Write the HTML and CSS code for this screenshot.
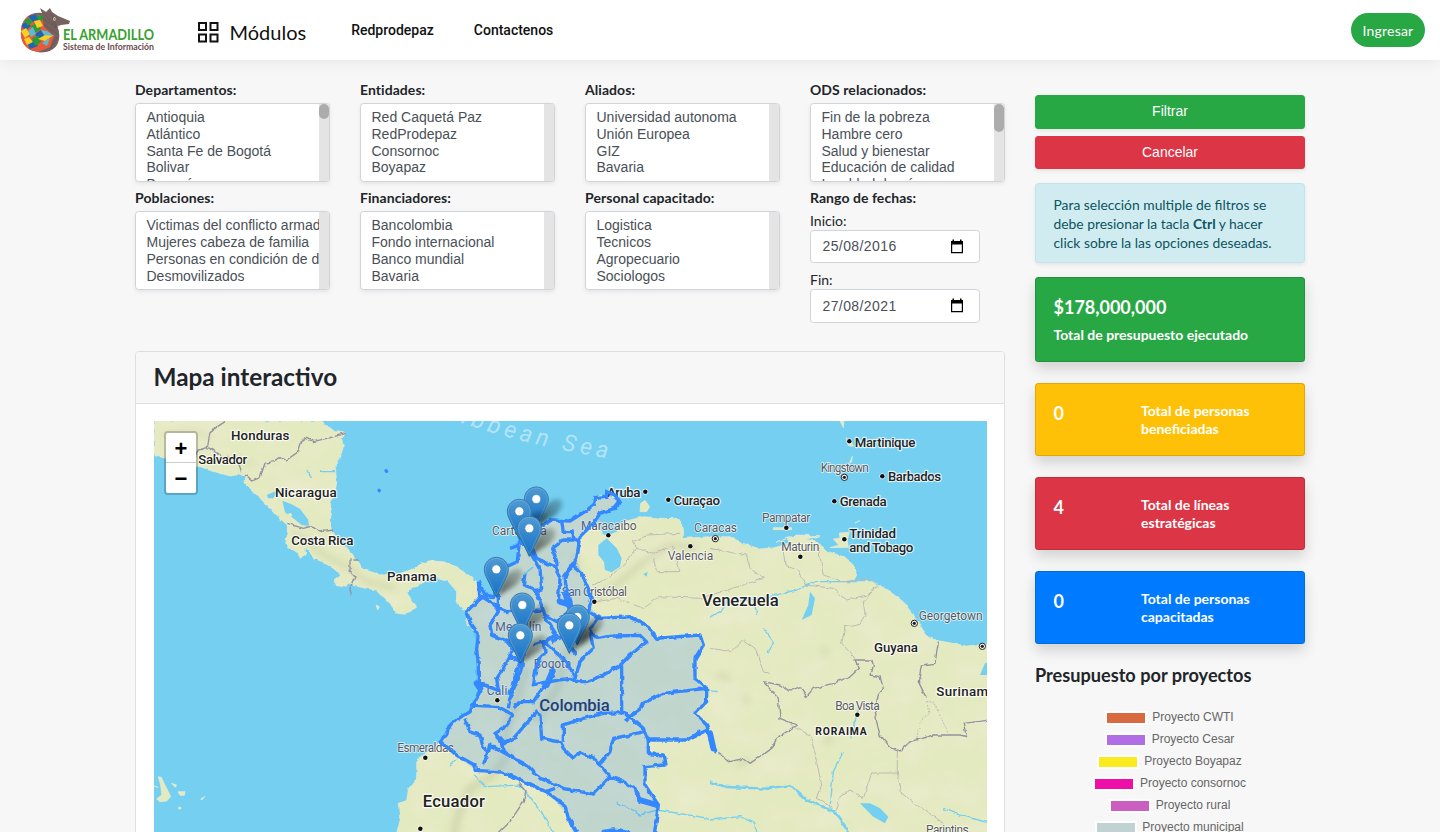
FILE: index.html
```html
<!DOCTYPE html>
<html lang="es">
<head>
<meta charset="utf-8">
<title>El Armadillo - Sistema de Información</title>
<link rel="stylesheet" href="styles.css">
</head>
<body>
<header class="navbar">
  <svg class="logo" width="136" height="46" viewBox="0 0 136 46" role="img" aria-label="El Armadillo">
    <defs><clipPath id="shell"><path d="M12 6C20 3 31 5 35 13C39 22 41 28 37 35C33 42 25 45 18 44C7 43 0 35 1 24C1 15 5 9 12 6Z"/></clipPath></defs>
    <path d="M14 6L22 5L20 0L26 4L30 0L32 4L38 8L50 13L49 16L41 17L37 18C40 25 40 31 37 37C32 44 24 45 18 44Z" fill="#75625f"/>
    <g clip-path="url(#shell)">
      <path d="M0 0H40V46H0Z" fill="#75625f"/>
      <path d="M0 10L12 5L22 8L24 19L34 28L30 39L18 44L5 40L0 28Z" fill="#e85b3a"/>
      <path d="M8 8L16 6L20 11L13 14ZM1 17L7 13L11 18L5 23ZM15 26L21 22L25 28L18 31ZM7 35L14 32L18 38L10 41Z" fill="#1f63b5"/>
      <path d="M16 7L23 8L22 13L18 12ZM4 12L9 10L13 14L8 18ZM11 18L17 15L21 21L15 25ZM12 30L19 28L21 34L15 38Z" fill="#279c3a"/>
      <path d="M1 23L6 20L10 26L5 30ZM14 13L20 12L23 18L17 20ZM18 31L25 27L34 27L25 33ZM4 31L9 29L13 34L7 37Z" fill="#f8cf22"/>
      <path d="M8 23L13 19L16 26L11 29ZM21 22L27 23L34 28L24 27ZM22 35L30 30L27 38Z" fill="#5fb9cf"/>
    </g>
    <path d="M25 7L36 19M31 5L36 18M21 9L36 20M35 20L40 17M24 16L37 26M29 43L37 29" stroke="#5d4c4a" stroke-width=".5" fill="none"/>
    <ellipse cx="34.5" cy="11" rx="1.2" ry="1.7" fill="#fff"/><circle cx="34.7" cy="11" r=".7" fill="#222"/>
    <text x="43" y="32" class="logo-name" textLength="91" lengthAdjust="spacingAndGlyphs">EL ARMADILLO</text>
    <text x="43" y="42" class="logo-sub" textLength="91" lengthAdjust="spacingAndGlyphs">Sistema de Información</text>
  </svg>
  <a class="modules"><svg width="22" height="22" viewBox="0 0 22 22" fill="none" stroke="#111" stroke-width="2"><path d="M2 2H9V9H2ZM13.500 2H20.500V9H13.500ZM2 13.500H9V20.500H2ZM13.500 13.500H20.500V20.500H13.500Z"/></svg><span>Módulos</span></a>
  <nav class="links"><a>Redprodepaz</a><a>Contactenos</a></nav>
  <a class="login">Ingresar</a>
</header>
<main class="container">
  <section class="main-col">
    <div class="filters">
      <div class="filter"><b>Departamentos:</b><div class="select"><ul><li>Antioquia</li><li>Atlántico</li><li>Santa Fe de Bogotá</li><li>Bolivar</li><li>Boyacá</li></ul><div class="track"><i class="thumb short"></i></div></div></div>
      <div class="filter"><b>Entidades:</b><div class="select"><ul><li>Red Caquetá Paz</li><li>RedProdepaz</li><li>Consornoc</li><li>Boyapaz</li></ul><div class="track"></div></div></div>
      <div class="filter"><b>Aliados:</b><div class="select"><ul><li>Universidad autonoma</li><li>Unión Europea</li><li>GIZ</li><li>Bavaria</li></ul><div class="track"></div></div></div>
      <div class="filter"><b>ODS relacionados:</b><div class="select"><ul><li>Fin de la pobreza</li><li>Hambre cero</li><li>Salud y bienestar</li><li>Educación de calidad</li><li>Igualdad de género</li></ul><div class="track"><i class="thumb"></i></div></div></div>
      <div class="filter"><b>Poblaciones:</b><div class="select"><ul><li>Victimas del conflicto armado</li><li>Mujeres cabeza de familia</li><li>Personas en condición de discapacidad</li><li>Desmovilizados</li></ul><div class="track"></div></div></div>
      <div class="filter"><b>Financiadores:</b><div class="select"><ul><li>Bancolombia</li><li>Fondo internacional</li><li>Banco mundial</li><li>Bavaria</li></ul><div class="track"></div></div></div>
      <div class="filter"><b>Personal capacitado:</b><div class="select"><ul><li>Logistica</li><li>Tecnicos</li><li>Agropecuario</li><li>Sociologos</li></ul><div class="track"></div></div></div>
      <div class="filter dates"><b>Rango de fechas:</b>
        <span class="date-label">Inicio:</span>
        <div class="date"><span>25/08/2016</span><svg width="14" height="16" viewBox="0 0 14 16"><path d="M1.600 3V13.600H12.400V3" fill="none" stroke="#000" stroke-width="1.200"/><path d="M1 2H13V5.500H1ZM2.500 .5H4V3H2.500ZM10 .5H11.500V3H10Z"/></svg></div>
        <span class="date-label">Fin:</span>
        <div class="date"><span>27/08/2021</span><svg width="14" height="16" viewBox="0 0 14 16"><path d="M1.600 3V13.600H12.400V3" fill="none" stroke="#000" stroke-width="1.200"/><path d="M1 2H13V5.500H1ZM2.500 .5H4V3H2.500ZM10 .5H11.500V3H10Z"/></svg></div>
      </div>
    </div>
    <article class="map-card">
      <h3>Mapa interactivo</h3>
      <div class="map-body"><div class="map">
        <svg class="map-svg" width="833" height="411" viewBox="12 18 2499 1233">
          <defs>
            <linearGradient id="pinFill" x1="0" y1="0" x2="0" y2="1"><stop offset="0" stop-color="#4f9bd3"/><stop offset="1" stop-color="#126fc6"/></linearGradient>
            <linearGradient id="pinEdge" x1="0" y1="0" x2="0" y2="1"><stop offset="0" stop-color="#3a7db0"/><stop offset="1" stop-color="#2e6c97"/></linearGradient>
            <linearGradient id="shade" x1="0" y1="1" x2="1" y2="0"><stop offset="0" stop-color="#000" stop-opacity=".8"/><stop offset="1" stop-color="#000" stop-opacity=".2"/></linearGradient>
            <filter id="soft" x="-50%" y="-50%" width="200%" height="200%"><feGaussianBlur stdDeviation="2.200"/></filter>
            <filter id="relief" x="-30%" y="-30%" width="160%" height="160%"><feGaussianBlur stdDeviation="9"/></filter>
            <filter id="rough" x="-5%" y="-5%" width="110%" height="110%" color-interpolation-filters="sRGB"><feTurbulence type="fractalNoise" baseFrequency=".05" numOctaves="2" seed="4"/><feDisplacementMap in="SourceGraphic" scale="12" xChannelSelector="R" yChannelSelector="G"/></filter>
            <filter id="mottle" x="0" y="0" width="100%" height="100%" color-interpolation-filters="sRGB"><feTurbulence type="fractalNoise" baseFrequency=".009 .011" numOctaves="3" seed="8"/><feColorMatrix values="0 0 0 0 .92  0 0 0 0 .925  0 0 0 0 .81  1.500 0 0 0 -.6"/><feComposite in2="SourceGraphic" operator="in"/></filter>
            <g id="pin">
              <path d="M13 40L18 26Q24 13 35 12Q44 17 31 29Z" fill="url(#shade)" opacity=".75" filter="url(#soft)"/>
              <path d="M12.500 .5C5.700 .5 .5 6 .5 12.600C.5 15.600 1.800 18.700 3 21.200L12.500 40.500L22 21.200C23.200 18.700 24.500 15.600 24.500 12.600C24.500 6 19.300 .5 12.500 .5Z" fill="url(#pinFill)" stroke="url(#pinEdge)"/>
              <path d="M12.500 1.600C6.300 1.600 1.600 6.600 1.600 12.600C1.600 15.400 2.800 18.200 4 20.700L12.500 38L21 20.700C22.200 18.200 23.400 15.400 23.400 12.600C23.400 6.600 18.700 1.600 12.500 1.600Z" fill="none" stroke="#fff" stroke-opacity=".15"/>
              <circle cx="12.500" cy="12.500" r="4.500" fill="#fff" stroke="#2b76ad" stroke-width=".6"/>
            </g>
            <g id="capital"><circle r="9.500" fill="#fff" stroke="#222" stroke-width="3"/><circle r="5" fill="#222"/></g>
            <g id="town"><circle r="8.500" fill="#fff"/><circle r="6.800" fill="#111"/></g>
            <path id="land" d="M12 18V122L45 130L100 148L150 155L200 172L240 183L270 178L285 186L282 200L310 230L345 265L370 290L395 315L412 330L412 355L405 375L412 398L440 408L455 430L468 415L460 398L480 407L490 430L530 445L560 465L572 482L555 495L560 512L585 515L597 504L615 512L645 520L680 525L700 545L720 565L740 595L765 598L800 577L785 560L770 530L800 513L825 500L835 480L860 490L895 500L920 530L918 560L950 590L950 625L985 656L980 700L985 800L995 823L975 856L960 891L920 911L890 956L850 1000L820 1020L800 1041L800 1091L775 1121L770 1156L745 1166L750 1221L740 1251V1520H2520V686L2450 693L2360 676L2330 661L2310 631L2290 600L2260 560L2220 530L2170 500L2110 500L2120 480L2110 450L2080 425L2030 408L2010 385L1970 372L2010 362L1940 360L1880 380L1915 370L1920 388L1870 398L1830 402L1780 385L1740 365L1680 365L1600 370L1600 340L1580 310L1540 310L1480 305L1420 320L1400 350L1370 365L1355 355L1345 320L1330 330L1350 295L1395 280L1410 258L1385 240L1335 248L1330 270L1305 290L1260 318L1205 315L1180 325L1130 330L1108 380L1102 440L1070 455L1035 500L1030 545L1005 540L980 500L950 475L920 455L880 440L840 437L815 445L790 462L750 475L700 480L665 470L640 465L625 440L605 415L580 390L550 350L540 320L545 290L540 260L555 240L560 200L555 150L570 130L580 95L575 70L590 55L555 50L530 30L515 18Z"/>
            <clipPath id="landClip"><use href="#land"/></clipPath>
          </defs>
          <path d="M0 0H2520V1520H0Z" fill="#74cff1"/>
          <g fill="#e4eac0" stroke="#e9ecd0" stroke-width="2">
            <use href="#land" filter="url(#rough)"/>
            <path d="M1472 265L1485 256L1499 275L1490 290L1470 290ZM2050 372L2070 370L2068 354L2098 352L2092 375L2095 397L2040 398L2066 390ZM2070 18H2082L2080 38ZM2088 68L2104 80L2110 94L2095 92ZM2098 145L2107 124L2105 140ZM1870 338H1925V344H1870ZM2115 324L2130 317ZM678 570L688 575L683 585ZM25 1085L34 1087L40 1100L55 1130L62 1145L50 1158L30 1160L20 1152L35 1140L32 1110ZM12 1113L24 1117ZM64 1105L80 1110L76 1117ZM84 1130L105 1130L103 1141L90 1141ZM152 1152L165 1144L155 1155ZM86 1177H93V1182H86Z"/>
          </g>
          <g clip-path="url(#landClip)">
            <use href="#land" filter="url(#mottle)"/>
            <g filter="url(#relief)" fill="none" stroke="#b6bb92" opacity=".35">
              <path d="M430 350L490 395L540 430L600 460L650 500L740 520" stroke-width="14"/>
              <path d="M40 60L110 45L190 70M250 130L320 150" stroke-width="8"/>
              <path d="M1280 420L1280 470M1340 545L1400 510L1480 440L1560 390L1640 400" stroke-width="17"/>
              <path d="M1080 1010L1030 1080L960 1120L920 1210L900 1350M1130 760L1090 880L1060 980M1250 700L1220 820L1160 920" stroke-width="25"/>
              <path d="M1700 780L1740 790M1780 850L1800 860M2020 700L2030 720M1760 1050L1800 1035M2020 980L2050 970" stroke-width="15"/>
            </g>
          </g>
          <g fill="#74cff1" stroke="none">
            <path d="M397 257L425 268L450 282L475 315L477 333L455 330L430 310L405 292Z"/><circle cx="420" cy="300" r="6" fill="#e5eac1"/>
            <path d="M350 240L385 225L370 250L355 250ZM1370 370L1400 400L1415 430L1410 455L1385 472L1365 465L1362 440L1345 420L1345 390ZM1480 477L1493 470L1490 485ZM1980 530L1995 550L1985 600L1955 615L1975 570ZM2130 1165L2160 1165L2190 1180L2215 1205L2205 1225L2170 1205L2140 1175ZM2490 780L2505 745L2520 740V780Z"/>
          </g>
          <g fill="none" stroke="#74cff1" stroke-width="4" filter="url(#rough)">
            <path d="M1680 610L1720 580L1730 560L1860 545L1940 525L1990 500L2120 500"/>
            <path d="M1680 1101L1730 1116L1850 1121L1920 1111L1970 1156L2055 1191L2095 1251" stroke-width="7"/>
            <path d="M1810 540L1820 600M1840 640L1870 680L1855 715M2040 1180L2050 1070L2080 1010M2100 970L2130 870M1680 1215L1770 1205L1815 1225L1818 1270M970 1080L1010 1115L1110 1110L1180 1200L1230 1290M1400 1161L1470 1200L1520 1185L1680 1210M1640 820L1700 830M2380 1180L2430 1200L2520 1225M1170 830L1150 870M920 1031L900 1050M470 165L485 190M510 170H555M1120 480L1150 455"/>
          </g>
          <g fill="none" stroke="#9291a0" stroke-width="4" stroke-linejoin="round" filter="url(#rough)">
            <path d="M225 20L180 50L172 98L145 105L135 125M175 98L215 125L260 130L275 170M285 180L305 198L330 188L345 145L370 140L390 125L410 135L445 110L455 80L470 70L490 80L590 55M412 325L460 340L480 335L515 350L552 345M600 430L600 470L615 485L600 520L605 542M610 435L628 435"/>
            <path d="M1840 800L1890 810L1920 828L1950 815L1970 845L1990 820L2050 805L2100 785L2128 760L2115 735H2165L2170 755L2160 780L2190 785L2200 820L2185 840L2175 880L2180 920L2190 960L2220 995L2250 1008L2280 980L2350 960L2430 960L2450 965L2440 925L2520 915M1840 800L1885 850L1890 910L1940 930L1880 970L1865 1000L1800 1045L1780 1030L1740 1040L1705 1015M2365 680L2355 745L2315 750L2305 800L2330 850M1105 1102L1128 1130L1120 1160L1080 1220L1000 1300"/>
            <g stroke="#bdbab5" stroke-width="3"><path d="M1330 510L1390 480L1430 440L1460 400L1450 380L1490 360L1590 355M1460 400L1510 415L1570 390M1340 560L1400 550L1480 580L1530 545L1650 550L1780 510L1840 490L1800 460L1790 420L1730 410L1680 400M1570 390L1590 470L1520 470L1510 430M1900 410L1905 450L1940 465L1970 510L2050 520L2090 555L2150 540L2180 515M2005 400L2020 480L2080 500L2160 490L2185 515M2180 515L2140 560L2145 600L2130 625L2085 635L2075 685L2115 730M1680 700L1745 710L1780 675L1815 700L1840 770L1860 775M1920 930L1980 960L2000 1040L2015 1110L2000 1145L2050 1180M2060 1185L2070 1145L2100 1125L2140 1150L2165 1074H2242V1008M2242 1074L2255 1135L2300 1170L2360 1210L2380 1225M1330 330L1360 315"/><path d="M2330 860H2350L2395 955M2335 870L2340 895L2310 920L2300 970L2270 990" stroke-dasharray="5 4"/></g>
          </g>
          <g class="city-labels">
            <text x="1293" y="344" textLength="167">Maracaibo</text><text x="1235" y="542" textLength="196">San Cristóbal</text><text x="1553" y="435" textLength="137">Valencia</text><text x="1632" y="351" textLength="129">Caracas</text><text x="1836" y="320" textLength="145">Pampatar</text><text x="2012" y="170" textLength="145">Kingstown</text><text x="1894" y="407" textLength="114">Maturin</text><text x="2306" y="614" textLength="192">Georgetown</text><text x="2056" y="884" textLength="133">Boa Vista</text><text x="1010" y="840" textLength="62">Cali</text><text x="1151" y="759" textLength="113">Bogota</text><text x="1036" y="648" textLength="138">Medellín</text><text x="742" y="1011" textLength="170">Esmeraldas</text><text x="2328" y="1258" textLength="128">Parintins</text>
            <text x="1026" y="360" textLength="164">Cartagena</text>
          </g>
          <text class="colombia" x="1168" y="887" textLength="211">Colombia</text>
          <g transform="translate(840 0)" class="region">
            <path class="fill" d="M145 500L165 540L190 545L195 500L230 455L262 440L268 380L300 340L340 340L365 315L420 318L465 290L490 270L495 248L520 245L545 240L570 258L555 280L510 295L490 325L455 360L440 435L460 480L485 530L475 570L510 610L600 605L650 630L680 670L810 660L820 690L795 730L795 790L830 820L830 860L795 895L830 930L840 960L857 1010L832 945L770 975H655V1016L700 1020L705 1050L645 1055V1110L685 1170L670 1280H440L405 1190L350 1130L265 1090L215 1070L135 1065L80 1020L30 978L60 925L105 905L135 860L155 820L140 790L145 700L120 621L110 590L150 550Z"/>
            <g filter="url(#rough)"><path d="M145 500L165 540L190 545L195 500L230 455L262 440L268 380L290 330L340 330L365 315L420 318L465 290L490 270L495 248L520 245L545 240L570 258L555 280L510 295L490 325L450 365L440 430L405 490L410 530L420 560L385 560L390 490L375 455L320 430L305 395L270 380M395 320L400 350L430 350L430 375L400 375L368 400L380 440L382 470M430 370L450 380L440 430L400 485M430 455L455 475L475 520L485 555L475 590L510 610L600 605L650 630L680 670L810 660L820 690L795 730L795 790L830 820L830 860L795 895L830 930L840 960L857 1010L832 945L770 975H655V1016L700 1020L705 1050L645 1055V1110L685 1170L670 1280"/>
            <path d="M145 500L150 550L110 590L120 621L145 656L140 701L145 751L145 801L155 821L135 856L120 891L80 911L60 931L50 956L30 979L80 1021L135 1051V1066L215 1071L265 1091L350 1131L405 1171L415 1210L440 1250M165 545L195 575L205 590L180 630L185 661L230 676L250 701L220 761L200 791L205 826L150 805M205 535L205 580L230 590L340 585M285 480L280 510L310 520L325 545L345 600L380 620L420 590L400 530M300 410L330 465L335 520L310 530M150 540L200 575M340 600L380 660L345 680L375 710L410 740L440 800H470L520 780L570 751L600 720L650 681L630 661L550 663L500 670L480 640L510 600M480 650L490 700L450 740L435 790M365 680L395 665L440 720M310 690L340 680L345 710L320 750L310 810L345 801M240 700L280 710L275 760L240 850L235 880M235 720L270 740L250 800L240 840M250 880L270 860L310 860L350 801L420 790L440 801M350 801L370 780M105 911L120 950L150 960L160 1000L175 1010L180 990L225 1015L215 990L250 970L320 891L330 901L335 970L390 981L400 1000L430 1030L450 1010L490 1030L510 1048L540 1010L550 970L600 960L640 950M120 870L205 875L250 900L220 940L195 955L220 985L260 965M180 990L160 1050M225 1015L290 1050L330 1090L400 1120L490 1137L540 1086L580 1100L615 1120L630 1160L685 1170M540 1086L510 1048M400 980V930L460 910L520 895L585 893L640 940L655 975M585 915L630 885L640 865L700 835L830 820M575 751V891M345 1131L375 1120M515 1250L550 1245L600 1253M270 390L240 400M360 780L345 820M790 965L810 950"/></g>
            <g class="thick"><path d="M368 768L350 810M390 560L420 570M140 805L150 820M840 955L850 1000M630 1155L680 1170"/></g>
          </g>
          <path d="M708 167L710 169M687 226L688 227" stroke="#3388ff" stroke-width="10" stroke-linecap="round"/>
          <g class="country-labels">
            <text x="243" y="76" textLength="175">Honduras</text><text x="145" y="147" textLength="147">Salvador</text><text x="375" y="246" textLength="185">Nicaragua</text><text x="424" y="391" textLength="186">Costa Rica</text><text x="711" y="498" textLength="149">Panama</text><text x="1371" y="245" textLength="100">Aruba</text><text x="1571" y="270" textLength="139">Curaçao</text><text x="2114" y="96" textLength="182">Martinique</text><text x="2214" y="199" textLength="159">Barbados</text><text x="2069" y="274" textLength="141">Grenada</text><text x="2098" y="368" textLength="140">Trinidad</text><text x="2098" y="411" textLength="192">and Tobago</text><text x="2172" y="711" textLength="132">Guyana</text><text x="2359" y="843" textLength="178">Suriname</text>
            <text class="big" x="1656" y="574" textLength="230">Venezuela</text><text class="big" x="818" y="1176" textLength="187">Ecuador</text><text class="state" x="1996" y="961" textLength="154">RORAIMA</text>
          </g>
          <path d="M1370 252V230L1395 240L1407 258L1390 280" fill="none" stroke="#3388ff" stroke-width="10"/>
          <path id="seaCurve" d="M850 -6C980 42 1140 94 1400 134" fill="none"/><text class="sea"><textPath href="#seaCurve" startOffset="0" textLength="540">aribbean Sea</textPath></text>
          <use href="#town" x="1486" y="230"/><use href="#town" x="1555" y="254"/><use href="#town" x="2098" y="79"/><use href="#town" x="2197" y="184"/><use href="#town" x="2053" y="259"/><use href="#town" x="1909" y="338"/><use href="#town" x="2083" y="373"/><use href="#town" x="1951" y="425"/><use href="#town" x="1375" y="361"/><use href="#town" x="1621" y="394"/><use href="#town" x="1333" y="560"/><use href="#town" x="2122" y="899"/><use href="#town" x="1042" y="856"/><use href="#town" x="826" y="1028"/><use href="#town" x="811" y="1241"/>
          <use href="#capital" x="1696" y="371"/><use href="#capital" x="2083" y="187"/><use href="#capital" x="2293" y="625"/><use href="#capital" x="2497" y="694"/>
          <use href="#pin" transform="translate(1121.500 214.500) scale(3)"/><use href="#pin" transform="translate(1070.500 251.500) scale(3)"/><use href="#pin" transform="translate(1100.500 302.500) scale(3)"/><use href="#pin" transform="translate(1001.500 425.500) scale(3)"/><use href="#pin" transform="translate(1079.500 532.500) scale(3)"/><use href="#pin" transform="translate(1244.500 568.500) scale(3)"/><use href="#pin" transform="translate(1220.500 593.500) scale(3)"/><use href="#pin" transform="translate(1073.500 623.500) scale(3)"/>
        </svg>
        <div class="zoom"><a>+</a><a>−</a></div>
      </div></div>
    </article>
  </section>
  <aside class="side-col">
    <button class="btn green">Filtrar</button>
    <button class="btn red">Cancelar</button>
    <div class="alert">Para selección multiple de filtros se debe presionar la tacla <b>Ctrl</b> y hacer click sobre la las opciones deseadas.</div>
    <div class="stat green budget"><strong>$178,000,000</strong><b>Total de presupuesto ejecutado</b></div>
    <div class="stat yellow"><strong>0</strong><b>Total de personas beneficiadas</b></div>
    <div class="stat red"><strong>4</strong><b>Total de líneas estratégicas</b></div>
    <div class="stat blue"><strong>0</strong><b>Total de personas capacitadas</b></div>
    <h5>Presupuesto por proyectos</h5>
    <ul class="legend">
      <li><i class="cwti"></i>Proyecto CWTI</li><li><i class="cesar"></i>Proyecto Cesar</li><li><i class="boyapaz"></i>Proyecto Boyapaz</li><li><i class="consornoc"></i>Proyecto consornoc</li><li><i class="rural"></i>Proyecto rural</li><li><i class="municipal"></i>Proyecto municipal</li>
    </ul>
  </aside>
</main>
</body>
</html>
```
FILE: styles.css
```css
* { box-sizing: border-box; }
html { font-size: 14px; }
body { margin: 0; height: 832px; overflow: hidden; background: #f7f7f7; color: #212529; font: 14px/21px Lato, sans-serif; }
ul { list-style: none; margin: 0; padding: 0; }
.navbar { height: 60px; background: #fff; display: flex; align-items: center; padding: 0 15px 0 20px; box-shadow: 0 2px 14px rgba(0,0,0,.07); }
.logo { flex: none; margin-top: 1px; }
.logo-name { font: 700 16px Lato, sans-serif; fill: #37a22e; }
.logo-sub { font: 700 8.600px Lato, sans-serif; fill: #6b4b4c; }
.modules { display: flex; align-items: center; gap: 10.500px; margin-left: 41px; font-size: 20px; color: #111; padding-top: 4px; }
.modules svg { margin-top: -1px; }
.links { display: flex; gap: 40px; margin-left: 45px; font: 500 14px/20px Roboto, sans-serif; color: #111; }
.login { margin-left: auto; width: 74px; height: 34px; border-radius: 17px; background: #28a745; color: #fff; text-align: center; line-height: 36px; letter-spacing: .2px; }
.container { width: 1170px; height: 753px; margin: 18.700px auto 0; display: flex; gap: 30px; align-items: flex-start; overflow: visible; }
.main-col { width: 870px; }
.filters { display: grid; grid-template-columns: repeat(4, 195px); column-gap: 30px; grid-template-rows: 108.300px 164px; }
.filter { display: flex; flex-direction: column; gap: 3px; }
.filter b { letter-spacing: .06px; }
.select { height: 79.500px; background: #fff; border: 1px solid #ced4da; border-radius: 3.500px; display: flex; overflow: hidden; box-shadow: 0 2px 4px rgba(0,0,0,.075); font-family: "Liberation Sans", sans-serif; line-height: 16.800px; color: #495057; }
.select ul { flex: 1; min-width: 0; overflow: hidden; padding: 5.250px 0 0 10.500px; white-space: nowrap; }
.track { width: 10px; background: #e4e4e4; }
.thumb { display: block; height: 28px; border-radius: 6px; background: #acacac; }
.thumb.short { height: 15px; }
.dates { gap: 0; }
.date-label { margin-top: 2px; line-height: 21px; }
.date { width: 170px; height: 33.500px; flex: none; margin: -1px 0 3px; padding: 0 15px 0 11.500px; background: #fff; border: 1px solid #ced4da; border-radius: 3.500px; display: flex; align-items: center; justify-content: space-between; font-family: "Liberation Sans", sans-serif; color: #495057; letter-spacing: .4px; }
.date + .date-label { margin-top: 2.800px; }
.map-card { height: 582px; background: #fff; border: 1px solid #dfdfdf; border-radius: 3.500px; overflow: hidden; }
h3 { margin: 0; height: 52px; padding: 0 17.500px; background: #f7f7f7; border-bottom: 1px solid #dfdfdf; font-size: 24.300px; font-weight: 700; line-height: 50px; }
.map-body { padding: 17px 17px 0 18px; }
.map { position: relative; width: 833px; height: 411px; overflow: hidden; }
.map-svg { display: block; }
.region path { fill: none; stroke: #3388ff; stroke-width: 10px; stroke-linejoin: round; }
.region .fill { fill: rgba(51,136,255,.2); stroke: none; }
.region .thick path { stroke-width: 18px; stroke-linecap: round; }
.city-labels text, .country-labels text, .colombia { font-family: Roboto, sans-serif; paint-order: stroke; stroke: rgba(255,255,255,.75); stroke-width: 5px; stroke-linejoin: round; fill: #58585c; font-size: 36px; }
.country-labels text { fill: #222; font-weight: 500; font-size: 40px; stroke-width: 7px; }
.country-labels .big { font-size: 50px; }
.country-labels .state { font-size: 31px; font-weight: 700; }
.colombia { fill: #202f50; stroke: rgba(220,230,235,.5); font-weight: 500; font-size: 50px; }
.sea { font: italic 70px Roboto, sans-serif; fill: #b3e4f7; }
.zoom { position: absolute; left: 10px; top: 10px; width: 34px; height: 64px; border: 2px solid rgba(0,0,0,.2); border-radius: 4px; background-clip: padding-box; }
.zoom a { display: block; height: 30px; background: #fff; color: #000; text-align: center; font: 700 22px/31px "Liberation Sans", sans-serif; }
.zoom a:first-child { border-bottom: 1px solid #ccc; border-radius: 2px 2px 0 0; }
.zoom a:last-child { border-radius: 0 0 2px 2px; }
.side-col { width: 270px; display: flex; flex-direction: column; padding-top: 16.300px; }
.btn { height: 33.600px; margin-bottom: 7px; border: 0; border-radius: 3.500px; color: #fff; font: 14px/21px "Liberation Sans", sans-serif; box-shadow: 0 2px 4px rgba(0,0,0,.075); }
.green { background: #28a745; }
.red { background: #dc3545; }
.yellow { background: #ffc107; }
.blue { background: #007bff; }
.alert { height: 80px; margin: 6.800px 0 14px; padding: 11px 17.500px; border: 1px solid #bee5eb; border-radius: 3.500px; background: #d1ecf1; color: #0c5460; font-size: 13.850px; line-height: 19px; box-shadow: 0 2px 4px rgba(0,0,0,.075); }
.stat { height: 73px; margin-bottom: 21px; padding: 18px 17.500px; border: 1px solid rgba(0,0,0,.125); border-radius: 3.500px; color: #fff; display: grid; grid-template-columns: 87.500px 130px; line-height: 18px; box-shadow: 0 7px 14px rgba(0,0,0,.15); }
.stat strong { font-size: 18px; font-weight: 700; line-height: 22px; }
.stat.budget { height: 85px; display: flex; flex-direction: column; gap: 8px; }
h5 { margin: 0 0 20px; font-size: 18.150px; line-height: 21px; font-weight: 700; }
.legend { font: 12px/22px "Liberation Sans", sans-serif; color: #666; padding-left: 1px; }
.legend li { display: flex; align-items: center; justify-content: center; gap: 7px; }
.legend i { width: 38px; height: 10px; box-shadow: 0 0 0 2px #fff; margin-top: 2px; }
.cwti { background: #d96a40; }
.cesar { background: #b16de5; }
.boyapaz { background: #f9eb1f; }
.consornoc { background: #ee0fa8; }
.rural { background: #cb5fbf; }
.municipal { background: #c0d3d2; }
```
